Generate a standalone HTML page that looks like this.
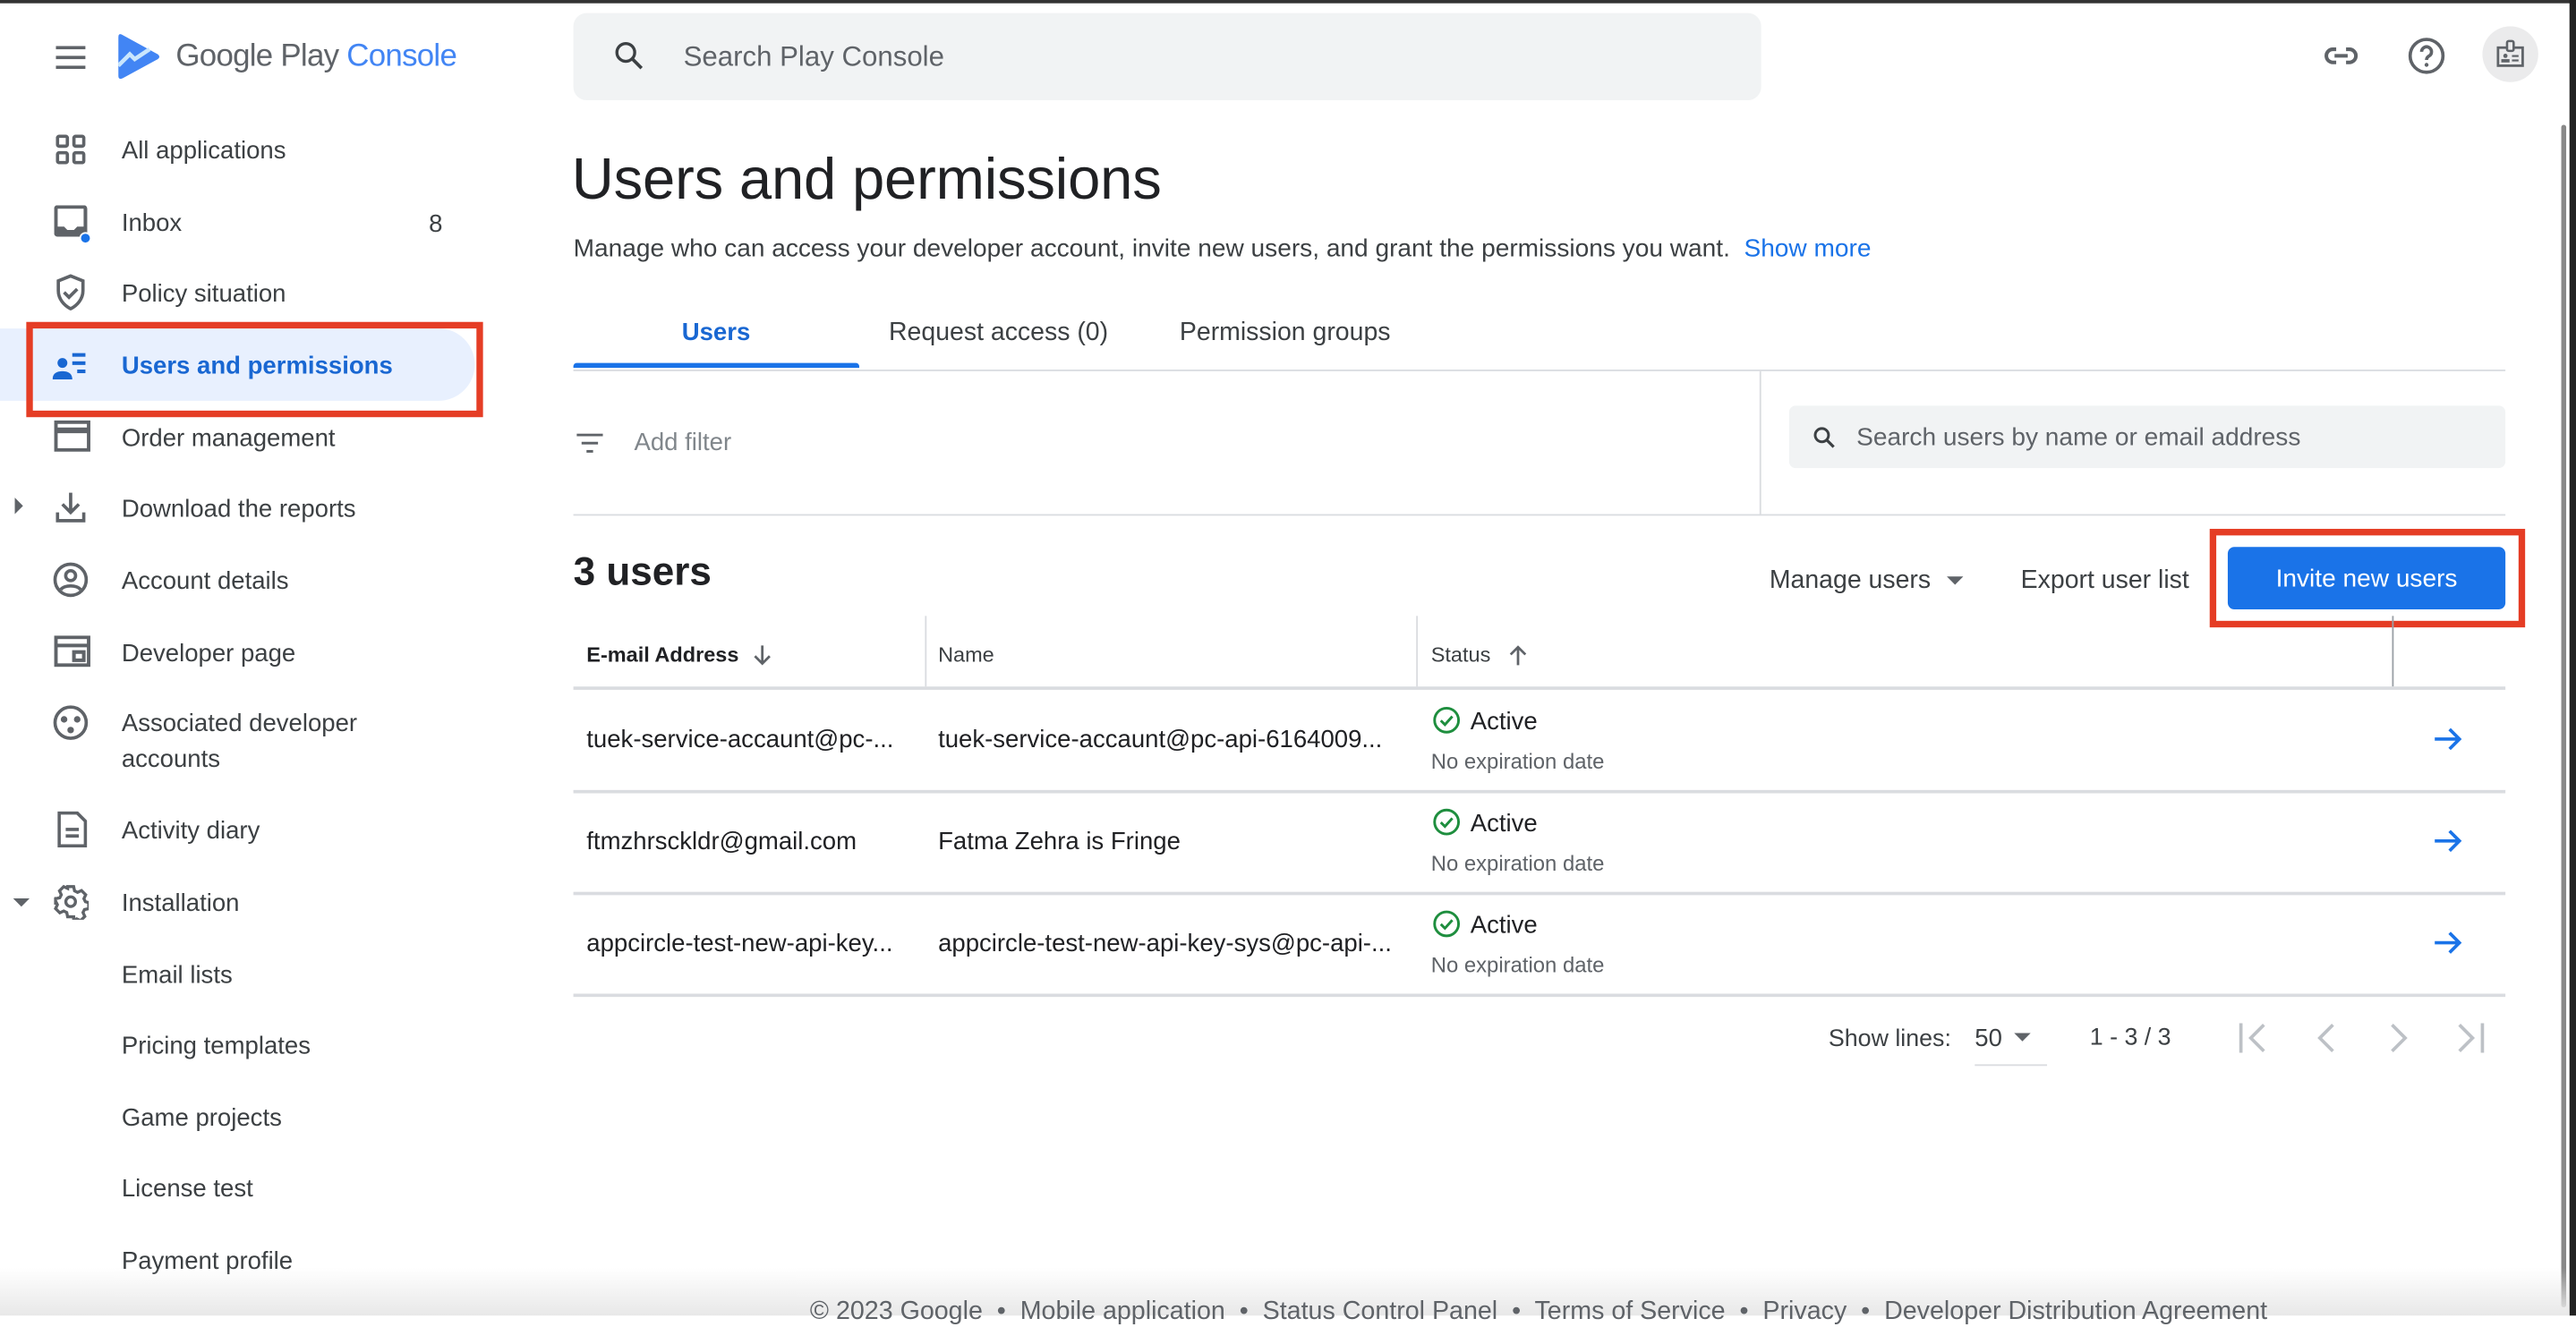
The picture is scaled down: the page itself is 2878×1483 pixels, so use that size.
<!DOCTYPE html>
<html><head><meta charset="utf-8"><style>
html,body{margin:0;padding:0;width:2878px;height:1470px;overflow:hidden;background:#fff;font-family:"Liberation Sans",Arial,sans-serif;}
#w{position:absolute;left:0;top:0;width:1568px;height:801px;transform:scale(1.8355);transform-origin:0 0;}
.a{position:absolute;white-space:nowrap;}
.nav{position:absolute;left:74px;font-size:15px;color:#3c4043;transform:translateY(-50%);margin-top:1px}
.ic{position:absolute;}
.t15{font-size:15px;color:#202124;}
.hl{position:absolute;height:1px;background:#dadce0;}
.vl{position:absolute;width:1px;background:#dadce0;}
</style></head><body><div id="w">
<div class="a" style="left:0;top:0;width:1568px;height:1.5px;background:#333"></div>
<svg class="ic" style="left:34px;top:28px" width="18" height="14"><rect y="0" width="18" height="2" fill="#5f6368"/><rect y="6" width="18" height="2" fill="#5f6368"/><rect y="12" width="18" height="2" fill="#5f6368"/></svg>
<svg class="ic" style="left:72px;top:20px" width="26" height="29" viewBox="0 0 26 29"><path d="M2 1 Q0 0 0 3 V26 Q0 29 3 27.5 L24 16 Q26 14.5 24 13 Z" fill="#4285f4"/><path d="M0 20 L7 13 L10 16 L19 10" stroke="#c9e6fd" stroke-width="2.5" fill="none"/></svg>
<div class="a" style="left:107px;top:24px;font-size:19px;color:#5f6368;letter-spacing:-0.4px">Google Play <span style="color:#4285f4">Console</span></div>
<div class="a" style="left:349px;top:8px;width:723px;height:53px;background:#f1f3f4;border-radius:8px"></div>
<svg class="ic" style="left:373px;top:24px" width="20" height="20" viewBox="0 0 24 24"><circle cx="9.5" cy="9.5" r="6.5" stroke="#3c4043" stroke-width="2.2" fill="none"/><path d="M14.5 14.5 L21 21" stroke="#3c4043" stroke-width="2.4"/></svg>
<div class="a" style="left:416px;top:25px;font-size:17px;color:#5f6368">Search Play Console</div>
<svg class="ic" style="left:1413px;top:22px" width="24" height="24" viewBox="0 0 24 24"><path d="M9 8H7a4 4 0 0 0 0 8h2M15 8h2a4 4 0 0 1 0 8h-2M8 12h8" stroke="#5f6368" stroke-width="2.2" fill="none"/></svg>
<svg class="ic" style="left:1465px;top:22px" width="24" height="24" viewBox="0 0 24 24"><circle cx="12" cy="12" r="10" stroke="#5f6368" stroke-width="2" fill="none"/><path d="M9 9.5a3 3 0 1 1 4.5 2.6c-1 .6-1.5 1.2-1.5 2.4" stroke="#5f6368" stroke-width="2" fill="none"/><circle cx="12" cy="17.5" r="1.2" fill="#5f6368"/></svg>
<div class="a" style="left:1511px;top:16px;width:34px;height:34px;border-radius:50%;background:#ebebec"></div>
<svg class="ic" style="left:1519px;top:24px" width="18" height="18" viewBox="0 0 18 18"><rect x="1.5" y="5" width="15" height="11" fill="none" stroke="#5f6368" stroke-width="1.5"/><rect x="7" y="1" width="4" height="6" rx="1" fill="#ebebec" stroke="#5f6368" stroke-width="1.4"/><circle cx="6" cy="10" r="1.3" fill="#5f6368"/><rect x="3.5" y="12" width="5" height="2" fill="#5f6368"/><rect x="10" y="9.5" width="4" height="1.2" fill="#5f6368"/><rect x="10" y="12.2" width="4" height="1.2" fill="#5f6368"/></svg>
<div class="a" style="left:1559px;top:76px;width:3px;height:720px;background:#888;border-radius:2px"></div>
<div class="a" style="left:1564px;top:0;width:4px;height:801px;background:#222"></div>

<div class="a" style="left:0;top:200px;width:289px;height:44px;background:#e8f0fe;border-radius:0 22px 22px 0"></div>
<div class="a" style="left:16px;top:196px;width:270px;height:50px;border:4px solid #e53d25"></div>
<svg class="ic" style="left:34px;top:82px" width="18" height="18" viewBox="0 0 18 18" fill="none" stroke="#5f6368" stroke-width="2"><rect x="1" y="1" width="6" height="6" rx="1"/><rect x="11" y="1" width="6" height="6" rx="1"/><rect x="1" y="11" width="6" height="6" rx="1"/><rect x="11" y="11" width="6" height="6" rx="1"/></svg>
<div class="nav" style="top:91px">All applications</div>
<svg class="ic" style="left:33px;top:125px" width="22" height="24" viewBox="0 0 22 24"><rect x="1" y="1" width="18" height="17" rx="1" fill="none" stroke="#5f6368" stroke-width="2.2"/><path d="M1 13H6l2 2h4l2-2h5v5H1z" fill="#5f6368"/><circle cx="19" cy="20" r="3.2" fill="#1a73e8" stroke="#fff" stroke-width="1"/></svg>
<div class="nav" style="top:135px">Inbox</div>
<div class="a" style="left:261px;top:128px;font-size:15px;color:#3c4043">8</div>
<svg class="ic" style="left:34px;top:167px" width="18" height="22" viewBox="0 0 18 22" fill="none" stroke="#5f6368" stroke-width="2"><path d="M9 1L1.5 4v6c0 5 3.5 9 7.5 11 4-2 7.5-6 7.5-11V4z"/><path d="M5 11l3 3 5-5"/></svg>
<div class="nav" style="top:178px">Policy situation</div>
<svg class="ic" style="left:32px;top:213px" width="22" height="18" viewBox="0 0 22 18" fill="#1967d2"><circle cx="6" cy="8" r="3"/><path d="M0 18c0-4 3-5 6-5s6 1 6 5z"/><rect x="12" y="2" width="8" height="2.2"/><rect x="12" y="7" width="8" height="2.2"/><rect x="15" y="12" width="5" height="2.2"/></svg>
<div class="nav" style="top:222px;color:#1967d2;font-weight:bold">Users and permissions</div>
<svg class="ic" style="left:33px;top:256px" width="22" height="19" viewBox="0 0 22 19" fill="none" stroke="#5f6368" stroke-width="2.2"><rect x="1" y="1" width="20" height="17"/><path d="M1 6h20" stroke-width="3.5"/></svg>
<div class="nav" style="top:266px">Order management</div>
<div class="a" style="left:9px;top:303px;width:0;height:0;border-left:5px solid #5f6368;border-top:5px solid transparent;border-bottom:5px solid transparent"></div>
<svg class="ic" style="left:34px;top:299px" width="18" height="20" viewBox="0 0 18 20" fill="none" stroke="#5f6368" stroke-width="2"><path d="M9 1v12M4 8l5 5 5-5M1 13v5h16v-5"/></svg>
<div class="nav" style="top:309px">Download the reports</div>
<svg class="ic" style="left:32px;top:342px" width="22" height="22" viewBox="0 0 22 22" fill="none" stroke="#5f6368" stroke-width="2"><circle cx="11" cy="11" r="9.5"/><circle cx="11" cy="8.5" r="3"/><path d="M5 17c2-3 10-3 12 0"/></svg>
<div class="nav" style="top:353px">Account details</div>
<svg class="ic" style="left:33px;top:387px" width="22" height="19" viewBox="0 0 22 19" fill="none" stroke="#5f6368" stroke-width="2.2"><rect x="1" y="1" width="20" height="17"/><path d="M1 6h20M12 10h6v5h-6z"/></svg>
<div class="nav" style="top:397px">Developer page</div>
<svg class="ic" style="left:32px;top:429px" width="22" height="22" viewBox="0 0 22 22"><circle cx="11" cy="11" r="9.5" fill="none" stroke="#5f6368" stroke-width="2"/><circle cx="7" cy="9" r="2" fill="#5f6368"/><circle cx="15" cy="9" r="2" fill="#5f6368"/><circle cx="11" cy="15.5" r="2" fill="#5f6368"/></svg>
<div class="a" style="left:74px;top:430px;font-size:15px;color:#3c4043;line-height:22px">Associated developer<br>accounts</div>
<svg class="ic" style="left:35px;top:494px" width="18" height="22" viewBox="0 0 18 22" fill="none" stroke="#5f6368" stroke-width="2"><path d="M1 1h11l5 5v15H1z"/><path d="M5 11h8M5 15h8"/></svg>
<div class="nav" style="top:505px">Activity diary</div>
<div class="a" style="left:8px;top:547px;width:0;height:0;border-top:5px solid #5f6368;border-left:5px solid transparent;border-right:5px solid transparent"></div>
<svg class="ic" style="left:32px;top:538px" width="22" height="22" viewBox="0 0 24 24" fill="none" stroke="#5f6368" stroke-width="2"><circle cx="12" cy="12" r="3.2"/><path d="M10 2h4l.6 2.8 2 1 2.6-1.2 2.8 2.8-1.2 2.6 1 2 2.2.6v4l-2.8.6-1 2 1.2 2.6-2.8 2.8-2.6-1.2-2 1L14 22h-4l-.6-2.8-2-1-2.6 1.2-2.8-2.8 1.2-2.6-1-2L2 14v-4l2.8-.6 1-2L4.6 4.8 7.4 2l2.6 1.2z"/></svg>
<div class="nav" style="top:549px">Installation</div>
<div class="nav" style="top:593px">Email lists</div>
<div class="nav" style="top:636px">Pricing templates</div>
<div class="nav" style="top:680px">Game projects</div>
<div class="nav" style="top:723px">License test</div>
<div class="nav" style="top:767px">Payment profile</div>

<div class="a" style="left:348px;top:89px;font-size:35.5px;color:#202124;letter-spacing:-0.1px">Users and permissions</div>
<div class="a" style="left:349px;top:143px;font-size:15.3px;color:#3c4043">Manage who can access your developer account, invite new users, and grant the permissions you want. &nbsp;<span style="color:#1a73e8">Show more</span></div>
<div class="a" style="left:415px;top:194px;font-size:15px;color:#1967d2;font-weight:bold">Users</div>
<div class="a" style="left:541px;top:194px;font-size:15.5px;color:#3c4043">Request access (0)</div>
<div class="a" style="left:718px;top:194px;font-size:15.5px;color:#3c4043">Permission groups</div>
<div class="hl" style="left:349px;top:225px;width:1176px"></div>
<div class="a" style="left:349px;top:221px;width:174px;height:3px;background:#1a73e8;border-radius:2px 2px 0 0"></div>
<svg class="ic" style="left:351px;top:264px" width="16" height="12" viewBox="0 0 16 12" fill="#5f6368"><rect width="16" height="1.6"/><rect x="3" y="5" width="10" height="1.6"/><rect x="6" y="10" width="4" height="1.6"/></svg>
<div class="a" style="left:386px;top:261px;font-size:15px;color:#80868b">Add filter</div>
<div class="vl" style="left:1071px;top:226px;height:87px"></div>
<div class="a" style="left:1089px;top:247px;width:436px;height:38px;background:#f1f3f4;border-radius:4px"></div>
<svg class="ic" style="left:1103px;top:259px" width="15" height="15" viewBox="0 0 24 24"><circle cx="9.5" cy="9.5" r="6.5" stroke="#3c4043" stroke-width="2.6" fill="none"/><path d="M14.5 14.5 L21 21" stroke="#3c4043" stroke-width="2.8"/></svg>
<div class="a" style="left:1130px;top:258px;font-size:15.3px;color:#5f6368">Search users by name or email address</div>
<div class="hl" style="left:349px;top:313px;width:1176px"></div>
<div class="a" style="left:349px;top:335px;font-size:24px;color:#202124;font-weight:bold">3 users</div>
<div class="a" style="left:1077px;top:345px;font-size:15.5px;color:#3c4043">Manage users</div>
<div class="a" style="left:1185px;top:351px;width:0;height:0;border-top:5px solid #5f6368;border-left:5px solid transparent;border-right:5px solid transparent"></div>
<div class="a" style="left:1230px;top:345px;font-size:15.5px;color:#3c4043">Export user list</div>
<div class="a" style="left:1356px;top:333px;width:169px;height:38px;background:#1a73e8;border-radius:4px;color:#fff;font-size:15.3px;text-align:center;line-height:40px">Invite new users</div>
<div class="a" style="left:1345px;top:322px;width:184px;height:52px;border:4px solid #e53d25"></div>

<div class="vl" style="left:563px;top:375px;height:43px"></div>
<div class="vl" style="left:862px;top:375px;height:43px"></div>
<div class="vl" style="left:1456px;top:375px;height:43px;background:#9aa0a6"></div>
<div class="a" style="left:357px;top:391px;font-size:12.8px;font-weight:bold;color:#202124">E-mail Address</div>
<svg class="ic" style="left:457px;top:392px" width="14" height="14" viewBox="0 0 14 14" fill="none" stroke="#5f6368" stroke-width="1.5"><path d="M7 1v11M2.5 7.5L7 12l4.5-4.5"/></svg>
<div class="a" style="left:571px;top:391px;font-size:12.8px;color:#3c4043">Name</div>
<div class="a" style="left:871px;top:391px;font-size:12.8px;color:#3c4043">Status</div>
<svg class="ic" style="left:917px;top:392px" width="14" height="14" viewBox="0 0 14 14" fill="none" stroke="#5f6368" stroke-width="1.5"><path d="M7 13V2M2.5 6.5L7 2l4.5 4.5"/></svg>
<div class="hl" style="left:349px;top:418px;width:1176px;height:1.5px"></div>
<div class="hl" style="left:349px;top:481px;width:1176px;height:1.5px"></div>
<div class="hl" style="left:349px;top:543px;width:1176px;height:1.5px"></div>
<div class="hl" style="left:349px;top:605px;width:1176px;height:1.5px"></div>

<div class="a t15" style="left:357px;top:442px">tuek-service-accaunt@pc-...</div>
<div class="a t15" style="left:571px;top:442px">tuek-service-accaunt@pc-api-6164009...</div>
<div class="a t15" style="left:357px;top:504px">ftmzhrsckldr@gmail.com</div>
<div class="a t15" style="left:571px;top:504px">Fatma Zehra is Fringe</div>
<div class="a t15" style="left:357px;top:566px">appcircle-test-new-api-key...</div>
<div class="a t15" style="left:571px;top:566px">appcircle-test-new-api-key-sys@pc-api-...</div>

<svg class="ic" style="left:872px;top:430px" width="17" height="17" viewBox="0 0 17 17" fill="none" stroke="#1e8e3e" stroke-width="1.6"><circle cx="8.5" cy="8.5" r="7.3"/><path d="M5 8.7l2.5 2.5 4.5-5"/></svg>
<div class="a t15" style="left:895px;top:431px">Active</div>
<div class="a" style="left:871px;top:456px;font-size:13px;color:#5f6368">No expiration date</div>
<svg class="ic" style="left:872px;top:492px" width="17" height="17" viewBox="0 0 17 17" fill="none" stroke="#1e8e3e" stroke-width="1.6"><circle cx="8.5" cy="8.5" r="7.3"/><path d="M5 8.7l2.5 2.5 4.5-5"/></svg>
<div class="a t15" style="left:895px;top:493px">Active</div>
<div class="a" style="left:871px;top:518px;font-size:13px;color:#5f6368">No expiration date</div>
<svg class="ic" style="left:872px;top:554px" width="17" height="17" viewBox="0 0 17 17" fill="none" stroke="#1e8e3e" stroke-width="1.6"><circle cx="8.5" cy="8.5" r="7.3"/><path d="M5 8.7l2.5 2.5 4.5-5"/></svg>
<div class="a t15" style="left:895px;top:555px">Active</div>
<div class="a" style="left:871px;top:580px;font-size:13px;color:#5f6368">No expiration date</div>

<svg class="ic" style="left:1481px;top:442px" width="18" height="16" viewBox="0 0 18 16" fill="none" stroke="#1a73e8" stroke-width="2"><path d="M1 8h15M10 2l6 6-6 6"/></svg>
<svg class="ic" style="left:1481px;top:504px" width="18" height="16" viewBox="0 0 18 16" fill="none" stroke="#1a73e8" stroke-width="2"><path d="M1 8h15M10 2l6 6-6 6"/></svg>
<svg class="ic" style="left:1481px;top:566px" width="18" height="16" viewBox="0 0 18 16" fill="none" stroke="#1a73e8" stroke-width="2"><path d="M1 8h15M10 2l6 6-6 6"/></svg>

<div class="a" style="left:1113px;top:625px;font-size:14.6px;color:#3c4043">Show lines:</div>
<div class="a" style="left:1202px;top:624px;font-size:15px;color:#3c4043">50</div>
<div class="a" style="left:1226px;top:629px;width:0;height:0;border-top:5px solid #5f6368;border-left:5px solid transparent;border-right:5px solid transparent"></div>
<div class="a" style="left:1202px;top:648px;width:44px;height:1px;background:#dadce0"></div>
<div class="a" style="left:1272px;top:624px;font-size:14.6px;color:#3c4043">1 - 3 / 3</div>
<svg class="ic" style="left:1362px;top:621px" width="152" height="22" viewBox="0 0 152 22" fill="none" stroke="#bdc1c6" stroke-width="2"><path d="M2 2v18M16 3l-8 8 8 8M58 3l-8 8 8 8M94 3l8 8-8 8M135 3l8 8-8 8M149 2v18"/></svg>

<div class="a" style="left:0;top:772px;width:1564px;height:29px;background:linear-gradient(rgba(255,255,255,0),#e8e8e8)"></div>
<div class="a" style="left:493px;top:790px;font-size:15.6px;color:#5f6368">© 2023 Google &nbsp;•&nbsp; Mobile application &nbsp;•&nbsp; Status Control Panel &nbsp;•&nbsp; Terms of Service &nbsp;•&nbsp; Privacy &nbsp;•&nbsp; Developer Distribution Agreement</div>
</div></body></html>
